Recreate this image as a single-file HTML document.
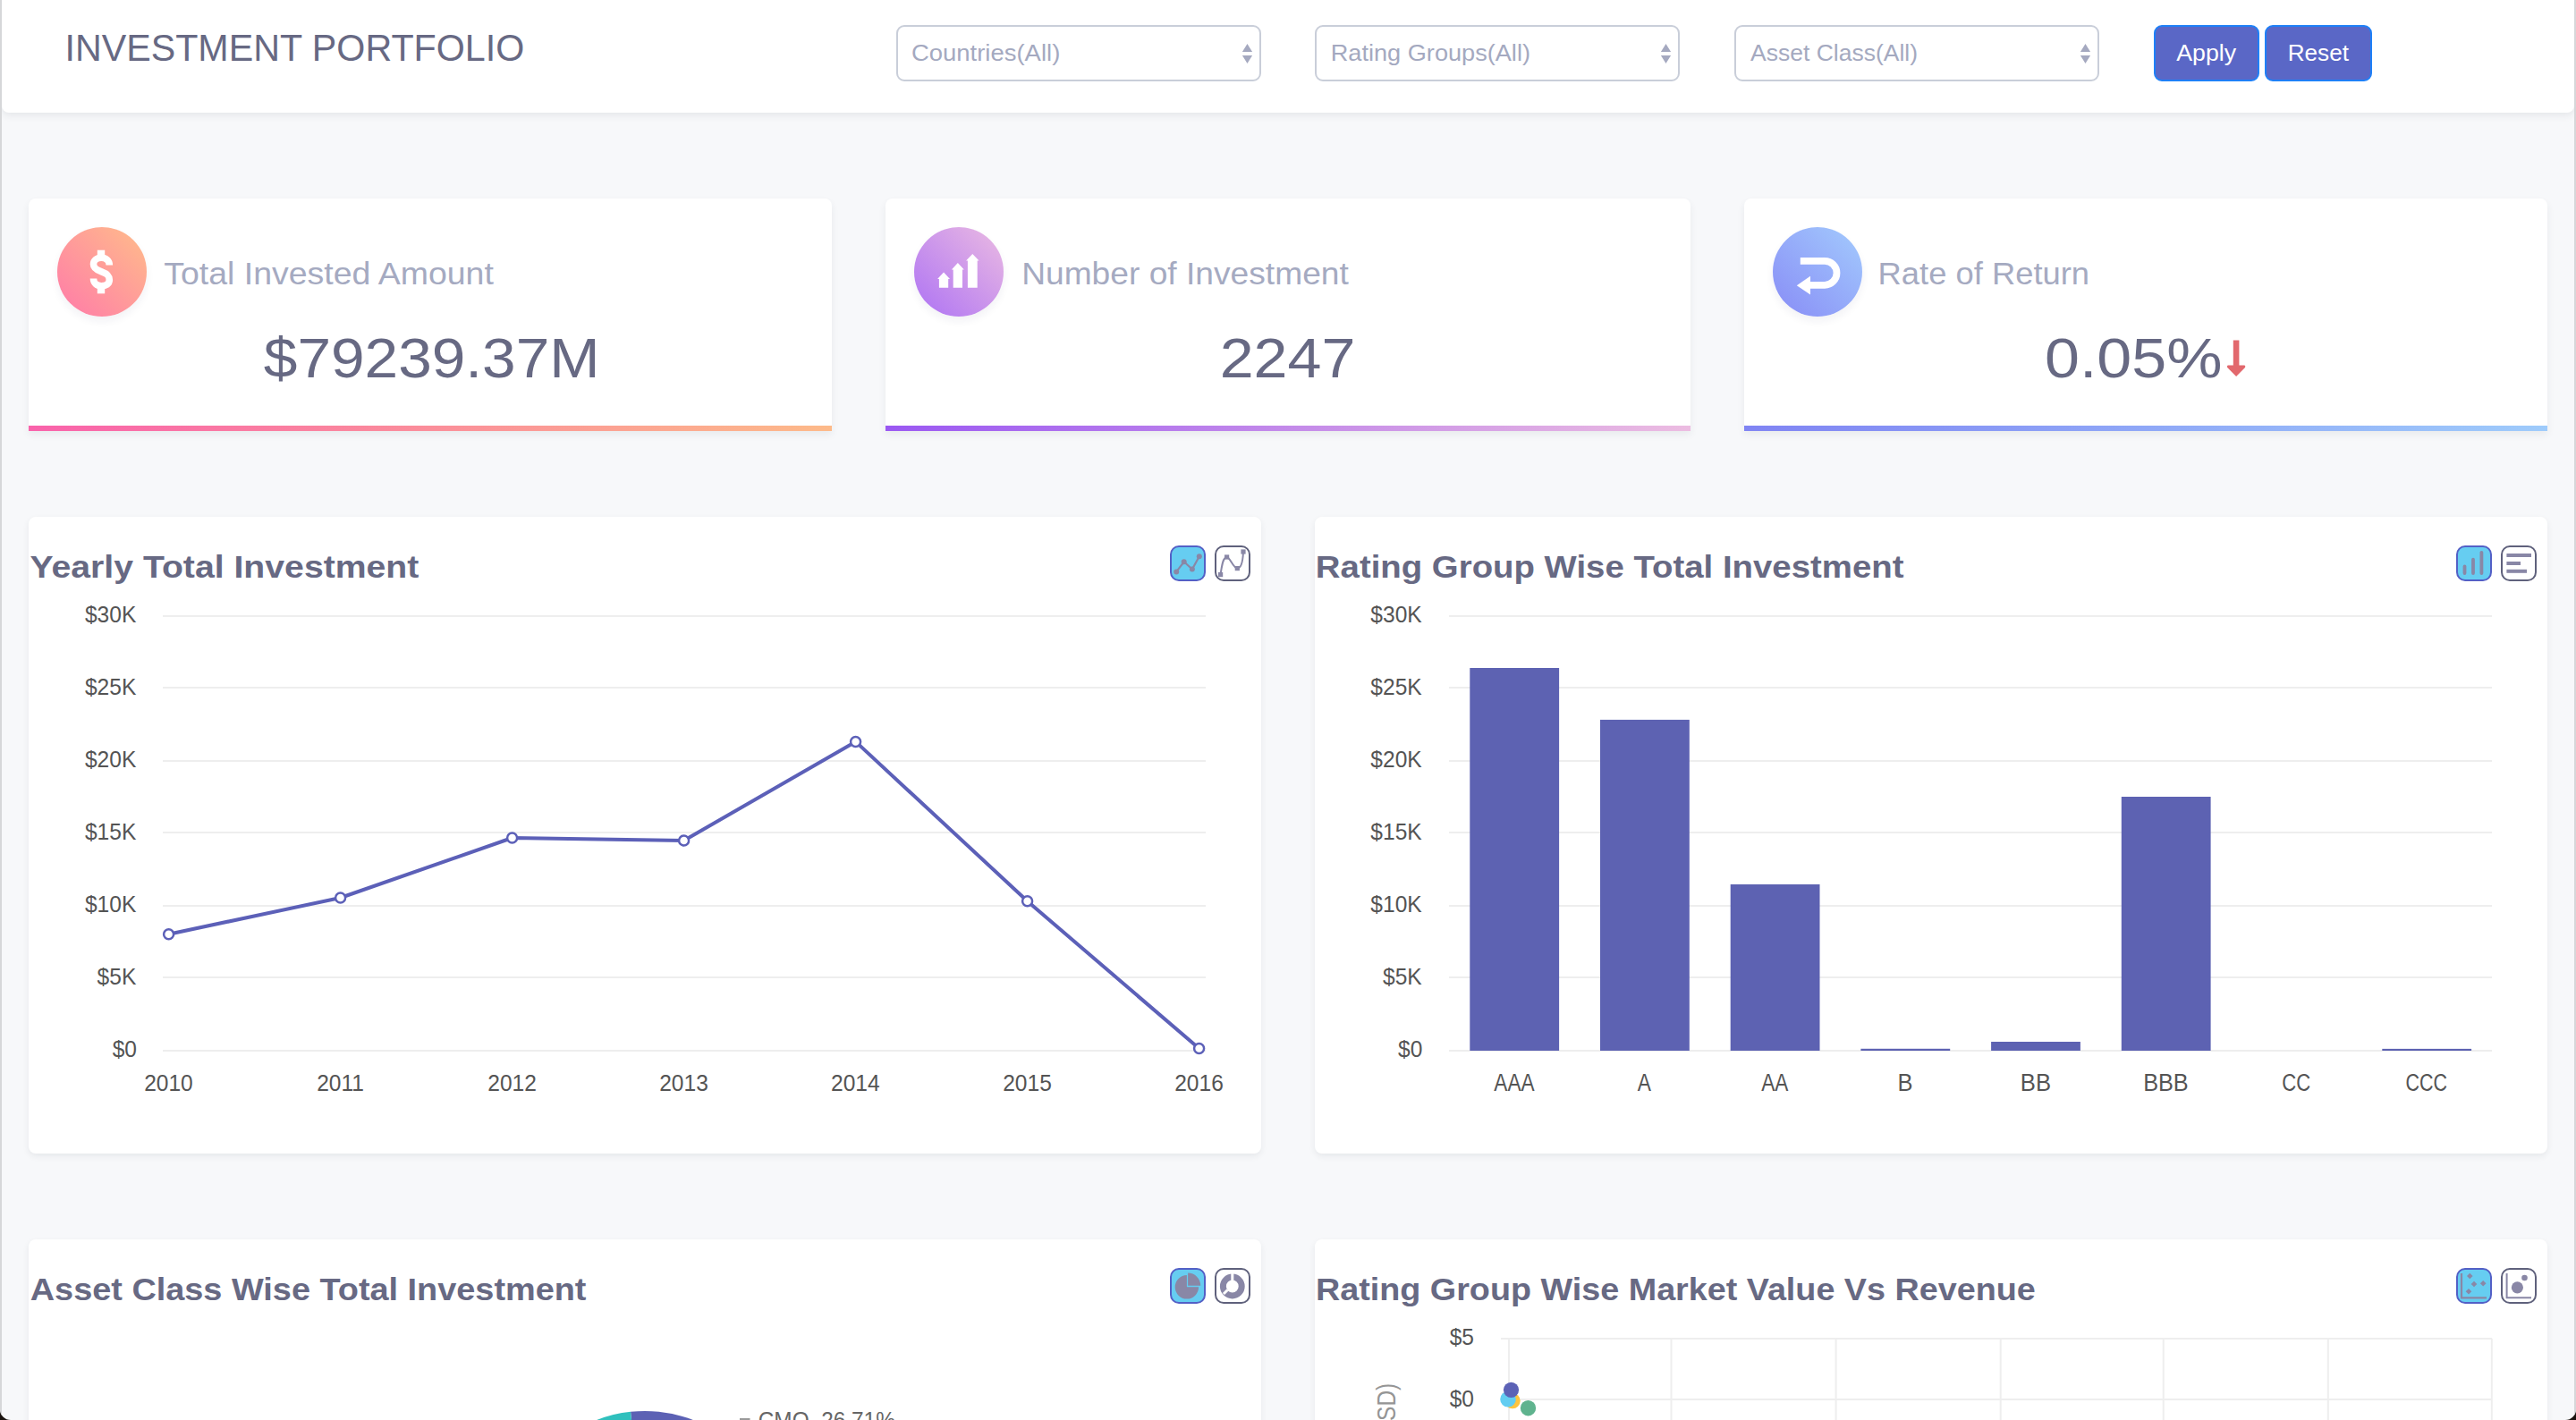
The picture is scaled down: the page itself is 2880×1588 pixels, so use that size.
<!DOCTYPE html>
<html><head><meta charset="utf-8"><title>Investment Portfolio</title>
<style>
*{margin:0;padding:0;box-sizing:border-box}
html,body{width:2880px;height:1588px;overflow:hidden;background:#1a1410}
body{position:relative;font-family:"Liberation Sans",sans-serif}
#win{position:absolute;left:0;top:0;width:2880px;height:1588px;background:#f7f8fa;border-radius:0 0 12px 12px;overflow:hidden}
.fr{position:absolute;top:0;width:2px;height:1588px;background:#d6d7d9}
#hdr{position:absolute;left:2px;top:0;width:2876px;height:126px;background:#fff;border-radius:0 0 8px 8px;box-shadow:0 3px 8px rgba(40,50,70,0.09)}
.sel{position:absolute;top:28px;width:408px;height:63px;border:2px solid #c9ced9;border-radius:9px;background:#fff}
.btn{position:absolute;top:28px;height:63px;background:#5a67c6;border:2px solid #1f80f7;border-radius:9px}
.card{position:absolute;background:#fff;border-radius:8px;box-shadow:0 3px 7px rgba(40,50,70,0.08)}
.bar{position:absolute;left:0;right:0;bottom:0;height:6px}
.ico{position:absolute;width:100px;height:100px;border-radius:50%;box-shadow:0 5px 10px rgba(40,40,80,0.06)}
svg{position:absolute;left:0;top:0}
@media (max-width:2000px){html{zoom:0.5}}
</style></head><body>
<div id="win">
<div id="hdr"></div>
<div class="sel" style="left:1002px"></div>
<div class="sel" style="left:1470px"></div>
<div class="sel" style="left:1939px"></div>
<div class="btn" style="left:2408px;width:118px"></div>
<div class="btn" style="left:2532px;width:120px"></div>

<div class="card" style="left:32px;top:222px;width:898px;height:260px;overflow:hidden;border-radius:8px 8px 0 0;box-shadow:0 4px 9px rgba(40,50,70,0.07)"><div class="bar" style="background:linear-gradient(90deg,#f962ab,#fdba89)"></div></div>
<div class="card" style="left:990px;top:222px;width:900px;height:260px;overflow:hidden;border-radius:8px 8px 0 0;box-shadow:0 4px 9px rgba(40,50,70,0.07)"><div class="bar" style="background:linear-gradient(90deg,#9a58f2,#ecbce1)"></div></div>
<div class="card" style="left:1950px;top:222px;width:898px;height:260px;overflow:hidden;border-radius:8px 8px 0 0;box-shadow:0 4px 9px rgba(40,50,70,0.07)"><div class="bar" style="background:linear-gradient(90deg,#8084f3,#9ecbfb)"></div></div>
<div class="ico" style="left:64px;top:254px;background:linear-gradient(45deg,#ff7aa9,#ffbd8a)"></div>
<div class="ico" style="left:1022px;top:254px;background:linear-gradient(45deg,#ad72f4,#ebbbe2)"></div>
<div class="ico" style="left:1982px;top:254px;background:linear-gradient(45deg,#888cf6,#a3cbfd)"></div>

<div class="card" style="left:32px;top:578px;width:1378px;height:712px"></div>
<div class="card" style="left:1470px;top:578px;width:1378px;height:712px"></div>
<div class="card" style="left:32px;top:1386px;width:1378px;height:712px"></div>
<div class="card" style="left:1470px;top:1386px;width:1378px;height:712px"></div>

<svg width="2880" height="1588" viewBox="0 0 2880 1588" font-family="Liberation Sans, sans-serif">
<text x="72.51" y="67.80" font-size="42.80" fill="#676983" textLength="513.77" lengthAdjust="spacingAndGlyphs" >INVESTMENT PORTFOLIO</text>
<text x="1018.93" y="68.00" font-size="26.40" fill="#a4a9c0" textLength="166.38" lengthAdjust="spacingAndGlyphs" >Countries(All)</text>
<text x="1487.77" y="68.00" font-size="26.40" fill="#a4a9c0" textLength="223.21" lengthAdjust="spacingAndGlyphs" >Rating Groups(All)</text>
<text x="1957.05" y="67.90" font-size="26.40" fill="#a4a9c0" textLength="186.99" lengthAdjust="spacingAndGlyphs" >Asset Class(All)</text>
<text x="2433.25" y="68.00" font-size="26.50" fill="#ffffff" textLength="66.82" lengthAdjust="spacingAndGlyphs" >Apply</text>
<text x="2557.65" y="68.00" font-size="26.50" fill="#ffffff" textLength="68.34" lengthAdjust="spacingAndGlyphs" >Reset</text>
<path d="M1388.9,57.9 L1394.5,49 L1400.1,57.9 Z M1388.9,62 L1394.5,71 L1400.1,62 Z" fill="#a5a9c0"/>
<path d="M1856.9,57.9 L1862.5,49 L1868.1,57.9 Z M1856.9,62 L1862.5,71 L1868.1,62 Z" fill="#a5a9c0"/>
<path d="M2325.9,57.9 L2331.5,49 L2337.1,57.9 Z M2325.9,62 L2331.5,71 L2337.1,62 Z" fill="#a5a9c0"/>
<text x="183.18" y="317.90" font-size="34.70" fill="#a5aac1" textLength="368.66" lengthAdjust="spacingAndGlyphs" >Total Invested Amount</text>
<text x="1142.15" y="317.70" font-size="34.70" fill="#a5aac1" textLength="365.69" lengthAdjust="spacingAndGlyphs" >Number of Investment</text>
<text x="2099.62" y="317.80" font-size="34.70" fill="#a5aac1" textLength="236.42" lengthAdjust="spacingAndGlyphs" >Rate of Return</text>
<text x="294.82" y="421.70" font-size="63.50" fill="#676983" textLength="375.72" lengthAdjust="spacingAndGlyphs" >$79239.37M</text>
<text x="1363.69" y="421.70" font-size="63.50" fill="#676983" textLength="151.66" lengthAdjust="spacingAndGlyphs" >2247</text>
<text x="2285.97" y="422.40" font-size="63.50" fill="#676983" textLength="198.51" lengthAdjust="spacingAndGlyphs" >0.05%</text>
<path d="M2496.8,380.5 L2503.4,380.5 L2503.4,408.5 L2509.5,408.5 Q2511,409.5 2510,411 L2500.1,421 L2490.2,411 Q2489.2,409.5 2490.7,408.5 L2496.8,408.5 Z" fill="#e2686d"/>
<text x="33.53" y="646.10" font-size="35.00" font-weight="bold" fill="#676983" textLength="434.83" lengthAdjust="spacingAndGlyphs" >Yearly Total Investment</text>
<text x="1470.87" y="646.10" font-size="35.00" font-weight="bold" fill="#676983" textLength="657.58" lengthAdjust="spacingAndGlyphs" >Rating Group Wise Total Investment</text>
<text x="33.79" y="1454.30" font-size="35.00" font-weight="bold" fill="#676983" textLength="621.68" lengthAdjust="spacingAndGlyphs" >Asset Class Wise Total Investment</text>
<text x="1471.01" y="1454.30" font-size="35.00" font-weight="bold" fill="#676983" textLength="804.76" lengthAdjust="spacingAndGlyphs" >Rating Group Wise Market Value Vs Revenue</text>
<rect x="182" y="688" width="1166" height="2" fill="#eeeeee"/>
<rect x="1620" y="688" width="1166" height="2" fill="#eeeeee"/>
<rect x="182" y="768" width="1166" height="2" fill="#eeeeee"/>
<rect x="1620" y="768" width="1166" height="2" fill="#eeeeee"/>
<rect x="182" y="850" width="1166" height="2" fill="#eeeeee"/>
<rect x="1620" y="850" width="1166" height="2" fill="#eeeeee"/>
<rect x="182" y="930" width="1166" height="2" fill="#eeeeee"/>
<rect x="1620" y="930" width="1166" height="2" fill="#eeeeee"/>
<rect x="182" y="1012" width="1166" height="2" fill="#eeeeee"/>
<rect x="1620" y="1012" width="1166" height="2" fill="#eeeeee"/>
<rect x="182" y="1092" width="1166" height="2" fill="#eeeeee"/>
<rect x="1620" y="1092" width="1166" height="2" fill="#eeeeee"/>
<rect x="182" y="1174" width="1166" height="2" fill="#eeeeee"/>
<rect x="1620" y="1174" width="1166" height="2" fill="#eeeeee"/>
<text x="94.94" y="696.00" font-size="26.40" fill="#545454" textLength="57.34" lengthAdjust="spacingAndGlyphs" >$30K</text>
<text x="1532.34" y="696.00" font-size="26.40" fill="#545454" textLength="57.34" lengthAdjust="spacingAndGlyphs" >$30K</text>
<text x="94.94" y="777.00" font-size="26.40" fill="#545454" textLength="57.34" lengthAdjust="spacingAndGlyphs" >$25K</text>
<text x="1532.34" y="777.00" font-size="26.40" fill="#545454" textLength="57.34" lengthAdjust="spacingAndGlyphs" >$25K</text>
<text x="94.94" y="858.00" font-size="26.40" fill="#545454" textLength="57.34" lengthAdjust="spacingAndGlyphs" >$20K</text>
<text x="1532.34" y="858.00" font-size="26.40" fill="#545454" textLength="57.34" lengthAdjust="spacingAndGlyphs" >$20K</text>
<text x="94.94" y="939.00" font-size="26.40" fill="#545454" textLength="57.34" lengthAdjust="spacingAndGlyphs" >$15K</text>
<text x="1532.34" y="939.00" font-size="26.40" fill="#545454" textLength="57.34" lengthAdjust="spacingAndGlyphs" >$15K</text>
<text x="94.94" y="1020.00" font-size="26.40" fill="#545454" textLength="57.34" lengthAdjust="spacingAndGlyphs" >$10K</text>
<text x="1532.34" y="1020.00" font-size="26.40" fill="#545454" textLength="57.34" lengthAdjust="spacingAndGlyphs" >$10K</text>
<text x="108.59" y="1101.00" font-size="26.40" fill="#545454" textLength="43.69" lengthAdjust="spacingAndGlyphs" >$5K</text>
<text x="1545.99" y="1101.00" font-size="26.40" fill="#545454" textLength="43.69" lengthAdjust="spacingAndGlyphs" >$5K</text>
<text x="125.63" y="1182.00" font-size="26.40" fill="#545454" textLength="27.31" lengthAdjust="spacingAndGlyphs" >$0</text>
<text x="1563.03" y="1182.00" font-size="26.40" fill="#545454" textLength="27.31" lengthAdjust="spacingAndGlyphs" >$0</text>
<text x="161.15" y="1220.00" font-size="26.40" fill="#545454" textLength="54.62" lengthAdjust="spacingAndGlyphs" >2010</text>
<text x="354.18" y="1220.00" font-size="26.40" fill="#545454" textLength="52.80" lengthAdjust="spacingAndGlyphs" >2011</text>
<text x="545.30" y="1220.00" font-size="26.40" fill="#545454" textLength="54.62" lengthAdjust="spacingAndGlyphs" >2012</text>
<text x="737.21" y="1220.00" font-size="26.40" fill="#545454" textLength="54.62" lengthAdjust="spacingAndGlyphs" >2013</text>
<text x="929.04" y="1220.00" font-size="26.40" fill="#545454" textLength="54.62" lengthAdjust="spacingAndGlyphs" >2014</text>
<text x="1121.19" y="1220.00" font-size="26.40" fill="#545454" textLength="54.62" lengthAdjust="spacingAndGlyphs" >2015</text>
<text x="1313.21" y="1220.00" font-size="26.40" fill="#545454" textLength="54.62" lengthAdjust="spacingAndGlyphs" >2016</text>
<polyline points="188.6,1044.7 380.6,1004.0 572.6,937.0 764.6,940.0 956.6,829.4 1148.6,1007.8 1340.6,1172.6" fill="none" stroke="#5c60b8" stroke-width="4" stroke-linejoin="round"/>
<circle cx="188.6" cy="1044.7" r="5.5" fill="#fff" stroke="#5c60b8" stroke-width="2.5"/>
<circle cx="380.6" cy="1004.0" r="5.5" fill="#fff" stroke="#5c60b8" stroke-width="2.5"/>
<circle cx="572.6" cy="937.0" r="5.5" fill="#fff" stroke="#5c60b8" stroke-width="2.5"/>
<circle cx="764.6" cy="940.0" r="5.5" fill="#fff" stroke="#5c60b8" stroke-width="2.5"/>
<circle cx="956.6" cy="829.4" r="5.5" fill="#fff" stroke="#5c60b8" stroke-width="2.5"/>
<circle cx="1148.6" cy="1007.8" r="5.5" fill="#fff" stroke="#5c60b8" stroke-width="2.5"/>
<circle cx="1340.6" cy="1172.6" r="5.5" fill="#fff" stroke="#5c60b8" stroke-width="2.5"/>
<rect x="1643.3" y="747" width="99.8" height="428.0" fill="#5d62b2"/>
<text x="1670.35" y="1219.80" font-size="27.00" fill="#545454" textLength="45.29" lengthAdjust="spacingAndGlyphs" >AAA</text>
<rect x="1789.0" y="804.9" width="99.8" height="370.1" fill="#5d62b2"/>
<text x="1830.85" y="1219.80" font-size="27.00" fill="#545454" textLength="15.19" lengthAdjust="spacingAndGlyphs" >A</text>
<rect x="1934.7" y="989" width="99.8" height="186.0" fill="#5d62b2"/>
<text x="1969.25" y="1219.80" font-size="27.00" fill="#545454" textLength="30.19" lengthAdjust="spacingAndGlyphs" >AA</text>
<rect x="2080.4" y="1172.8" width="99.8" height="2.2" fill="#5d62b2"/>
<text x="2121.51" y="1219.80" font-size="27.00" fill="#545454" textLength="17.02" lengthAdjust="spacingAndGlyphs" >B</text>
<rect x="2226.1" y="1165" width="99.8" height="10.0" fill="#5d62b2"/>
<text x="2258.80" y="1219.80" font-size="27.00" fill="#545454" textLength="34.24" lengthAdjust="spacingAndGlyphs" >BB</text>
<rect x="2371.8" y="891" width="99.8" height="284.0" fill="#5d62b2"/>
<text x="2396.13" y="1219.80" font-size="27.00" fill="#545454" textLength="50.59" lengthAdjust="spacingAndGlyphs" >BBB</text>
<text x="2551.19" y="1219.80" font-size="27.00" fill="#545454" textLength="31.93" lengthAdjust="spacingAndGlyphs" >CC</text>
<rect x="2663.3" y="1172.9" width="99.8" height="2.1" fill="#5d62b2"/>
<text x="2689.52" y="1219.80" font-size="27.00" fill="#545454" textLength="46.58" lengthAdjust="spacingAndGlyphs" >CCC</text>
<rect x="1678" y="1496" width="1108" height="2" fill="#eeeeee"/>
<rect x="1678" y="1564" width="1108" height="2" fill="#eeeeee"/>
<rect x="1686" y="1497" width="2" height="100" fill="#eeeeee"/>
<rect x="1867.5" y="1497" width="2" height="100" fill="#eeeeee"/>
<rect x="2051.6" y="1497" width="2" height="100" fill="#eeeeee"/>
<rect x="2235.7" y="1497" width="2" height="100" fill="#eeeeee"/>
<rect x="2417.7" y="1497" width="2" height="100" fill="#eeeeee"/>
<rect x="2601.8" y="1497" width="2" height="100" fill="#eeeeee"/>
<rect x="2784.8" y="1497" width="2" height="100" fill="#eeeeee"/>
<text x="1620.70" y="1504.30" font-size="26.40" fill="#545454" textLength="27.31" lengthAdjust="spacingAndGlyphs" >$5</text>
<text x="1620.63" y="1573.30" font-size="26.40" fill="#545454" textLength="27.31" lengthAdjust="spacingAndGlyphs" >$0</text>
<text transform="translate(1560,1719.56) rotate(-90)" x="0" y="0" font-size="28.8" fill="#959595" textLength="172.78" lengthAdjust="spacingAndGlyphs">Revenue (USD)</text>
<circle cx="1691" cy="1566.6" r="8.7" fill="#fec43f"/>
<circle cx="1686" cy="1564.8" r="8.8" fill="#63cdf1"/>
<circle cx="1689.5" cy="1554.3" r="8.6" fill="#5c62b6"/>
<circle cx="1708.5" cy="1574.7" r="8.7" fill="#5fb38e"/>
<path d="M721,1728 L705.06,1578.85 A150,150 0 0 1 871.00,1728.26 Z" fill="#5c61b4"/>
<path d="M721,1728 L573.28,1701.95 A150,150 0 0 1 705.06,1578.85 Z" fill="#2fc0bd"/>
<text x="847.78" y="1597.00" font-size="26.40" fill="#666666" textLength="153.08" lengthAdjust="spacingAndGlyphs" >CMO, 26.71%</text>
<rect x="827" y="1586" width="11.5" height="2" fill="#999"/>
<rect x="1309" y="611" width="38" height="38" rx="9" fill="#66cdf1" stroke="#5360c6" stroke-width="2"/>
<polyline points="1315.2,639.4 1323.7,628.3 1332.9,636.6 1340.8,622.3" fill="none" stroke="#8987a6" stroke-width="2.2"/>
<circle cx="1315.2" cy="639.4" r="3" fill="#8987a6"/>
<circle cx="1323.7" cy="628.3" r="3" fill="#8987a6"/>
<circle cx="1332.9" cy="636.6" r="3" fill="#8987a6"/>
<circle cx="1340.8" cy="622.3" r="3" fill="#8987a6"/>
<rect x="1359" y="611" width="38" height="38" rx="9" fill="#ffffff" stroke="#5f617c" stroke-width="2"/>
<path d="M1364.6,642.6 C1366,632 1367.5,623 1371.6,623 C1375,623 1379,635.6 1383.3,635.6 C1387.5,635.6 1389.5,628 1390,617" fill="none" stroke="#8987a6" stroke-width="2"/>
<rect x="1362.0" y="640.0" width="5.2" height="5.2" fill="#8987a6"/>
<rect x="1369.0" y="620.4" width="5.2" height="5.2" fill="#8987a6"/>
<rect x="1380.7" y="633.0" width="5.2" height="5.2" fill="#8987a6"/>
<rect x="1387.4" y="614.4" width="5.2" height="5.2" fill="#8987a6"/>
<rect x="2747" y="611" width="38" height="38" rx="9" fill="#66cdf1" stroke="#5360c6" stroke-width="2"/>
<line x1="2755.5" y1="633.5" x2="2755.5" y2="641" stroke="#8987a6" stroke-width="3.8" stroke-linecap="round"/>
<line x1="2765" y1="625.7" x2="2765" y2="641" stroke="#8987a6" stroke-width="3.8" stroke-linecap="round"/>
<line x1="2774.4" y1="617.8" x2="2774.4" y2="641" stroke="#8987a6" stroke-width="3.8" stroke-linecap="round"/>
<rect x="2797" y="611" width="38" height="38" rx="9" fill="#ffffff" stroke="#5f617c" stroke-width="2"/>
<rect x="2802.4" y="619" width="27.59999999999991" height="4" fill="#8987a6"/>
<rect x="2802.4" y="628" width="15.599999999999909" height="4" fill="#8987a6"/>
<rect x="2802.4" y="636.8" width="22.59999999999991" height="4" fill="#8987a6"/>
<rect x="1309" y="1419" width="38" height="38" rx="9" fill="#66cdf1" stroke="#5360c6" stroke-width="2"/>
<path d="M1326.9,1426.1 L1326.9,1439.3 L1340.1,1439.3 A13.2,13.2 0 1 1 1326.9,1426.1 Z" fill="#8987a6"/>
<path d="M1328.1,1423.6 A14.1,14.1 0 0 1 1342.2,1437.7 L1328.1,1437.7 Z" fill="#8987a6"/>
<rect x="1359" y="1419" width="38" height="38" rx="9" fill="#ffffff" stroke="#5f617c" stroke-width="2"/>
<circle cx="1377.8" cy="1438.5" r="10.4" fill="none" stroke="#8987a6" stroke-width="7"/>
<rect x="1376.3" y="1422" width="3" height="10" fill="#ffffff"/>
<line x1="1368" y1="1447" x2="1372.5" y2="1442.5" stroke="#ffffff" stroke-width="3"/>
<rect x="2747" y="1419" width="38" height="38" rx="9" fill="#66cdf1" stroke="#5360c6" stroke-width="2"/>
<path d="M2752,1424 L2752,1451.3 L2780,1451.3" fill="none" stroke="#8987a6" stroke-width="2.2"/>
<path d="M2761.3,1423.7 L2764.6000000000004,1427 L2761.3,1430.3 L2758.0,1427 Z" fill="#8987a6"/>
<path d="M2766,1432.7 L2769.3,1436 L2766,1439.3 L2762.7,1436 Z" fill="#8987a6"/>
<path d="M2776.2,1431.9 L2779.5,1435.2 L2776.2,1438.5 L2772.8999999999996,1435.2 Z" fill="#8987a6"/>
<path d="M2760,1440.9 L2763.3,1444.2 L2760,1447.5 L2756.7,1444.2 Z" fill="#8987a6"/>
<rect x="2797" y="1419" width="38" height="38" rx="9" fill="#ffffff" stroke="#5f617c" stroke-width="2"/>
<path d="M2802.6,1424 L2802.6,1451.3 L2830,1451.3" fill="none" stroke="#8987a6" stroke-width="2"/>
<circle cx="2814.4" cy="1439.8" r="6.6" fill="#8987a6"/>
<circle cx="2822.5" cy="1429" r="3.3" fill="#8987a6"/>
<rect x="108.8" y="279.7" width="8.4" height="9" fill="#fff"/>
<rect x="108.8" y="319" width="8.4" height="9.3" fill="#fff"/>
<path d="M122.3,296.5 C122.3,291.5 118.5,288.2 113.2,288.2 C108,288.2 104.5,291.5 104.5,295.5 C104.5,300.5 109,302.3 113.5,303.8 C118.5,305.5 122.3,307.5 122.3,313 C122.3,317.5 118.5,319.7 113.2,319.7 C108,319.7 104.5,316.5 104.5,311.5" fill="none" stroke="#fff" stroke-width="7.6"/>
<path d="M1049.9,321.7 L1049.9,312.0 L1048.1000000000001,312.0 L1055.0500000000002,304.5 L1062.0,312.0 L1060.2,312.0 L1060.2,321.7 Z" fill="#fff"/>
<path d="M1065.7,321.7 L1065.7,301.4 L1063.9,301.4 L1070.85,293.9 L1077.8,301.4 L1076,301.4 L1076,321.7 Z" fill="#fff"/>
<path d="M1081.9,321.7 L1081.9,291.4 L1080.1000000000001,291.4 L1087.3000000000002,283.9 L1094.5,291.4 L1092.7,291.4 L1092.7,321.7 Z" fill="#fff"/>
<path d="M2012.8,291.8 L2040,291.8 A13.5,13.5 0 0 1 2040,318.8 L2023,318.8" fill="none" stroke="#fff" stroke-width="7.8"/>
<path d="M2008.8,319.2 L2024,308.7 L2024,329.5 Z" fill="#fff"/>
</svg>
<div class="fr" style="left:0"></div>
<div class="fr" style="right:0"></div>
</div>
</body></html>
